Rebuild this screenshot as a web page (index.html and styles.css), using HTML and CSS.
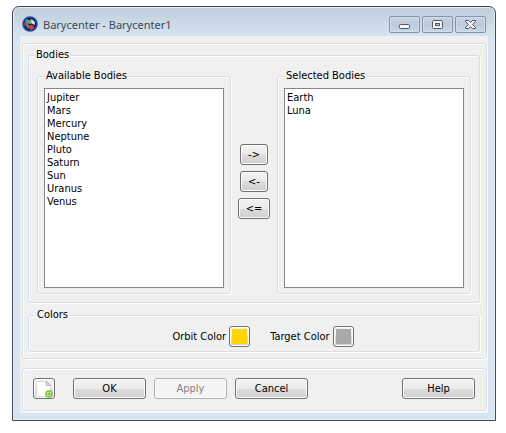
FILE: index.html
```html
<!DOCTYPE html>
<html lang="en">
<head>
<meta charset="utf-8">
<meta name="viewport" content="width=device-width, initial-scale=1">
<title>Barycenter - Barycenter1</title>
<link rel="stylesheet" href="styles.css">
</head>
<body>
<main class="window">
  <header class="titlebar">
    <svg class="app-icon" viewBox="0 0 16 16" aria-hidden="true">
      <circle cx="8" cy="8" r="7" fill="#13203f" stroke="#1d4fb0" stroke-width="1.6"/>
      <path d="M3 5 5 3 8 5 6 8 8 12 5 12Z" fill="#2d9be8"/>
      <path d="M6 5 10 3 9 7 6.500 8Z" fill="#4fc07a"/>
      <path d="M9.500 3 13 6 12.500 9 9 7Z" fill="#c9e4f2"/>
      <path d="M2 6 5 7 4.500 10 2.500 10Z" fill="#d8342c"/>
      <path d="M7.500 9 10.500 9 12.500 12 9 14 6.500 12Z" fill="#e03b2c"/>
      <path d="M4.500 3.500 9 8" stroke="#f06a32" stroke-width="1"/>
    </svg>
    <h1 class="title">Barycenter - Barycenter1</h1>
    <div class="window-buttons">
      <button class="caption" type="button" aria-label="Minimize">
        <svg viewBox="0 0 12 10"><rect x=".5" y="4.500" width="10" height="4" rx="1" fill="#f5f5f5" stroke="#535666"/></svg>
      </button>
      <button class="caption" type="button" aria-label="Maximize">
        <svg viewBox="0 0 12 10"><rect x=".5" y=".5" width="10" height="8" rx="1" fill="#f5f5f5" stroke="#535666"/><rect x="3.500" y="3.500" width="4" height="2" fill="#b9c9da" stroke="#535666"/></svg>
      </button>
      <button class="caption" type="button" aria-label="Close">
        <svg viewBox="0 0 12 10"><path d="M.5.5H3.500L5.500 2.500 7.500.5H10.500V1.500L7.500 4.500 10.500 7.500V8.500H7.500L5.500 6.500 3.500 8.500H.5V7.500L3.500 4.500.5 1.500Z" fill="#f5f5f5" stroke="#535666"/></svg>
      </button>
    </div>
  </header>
  <form class="client">
    <div class="frame content">
      <fieldset class="group bodies">
        <legend>Bodies</legend>
        <div class="transfer">
          <fieldset class="group list-group">
            <legend id="available">Available Bodies</legend>
            <select class="list" size="10" aria-labelledby="available">
              <option>Jupiter</option>
              <option>Mars</option>
              <option>Mercury</option>
              <option>Neptune</option>
              <option>Pluto</option>
              <option>Saturn</option>
              <option>Sun</option>
              <option>Uranus</option>
              <option>Venus</option>
            </select>
          </fieldset>
          <div class="moves">
            <button class="button move" type="button">-&gt;</button>
            <button class="button move" type="button">&lt;-</button>
            <button class="button move wide" type="button">&lt;=</button>
          </div>
          <fieldset class="group list-group">
            <legend id="selected">Selected Bodies</legend>
            <select class="list" size="10" aria-labelledby="selected">
              <option>Earth</option>
              <option>Luna</option>
            </select>
          </fieldset>
        </div>
      </fieldset>
      <fieldset class="group">
        <legend>Colors</legend>
        <div class="colors">
          <div class="color-field">
            <label for="orbit">Orbit Color</label>
            <button class="button swatch" id="orbit" type="button"><span class="chip orbit"></span></button>
          </div>
          <div class="color-field">
            <label for="target">Target Color</label>
            <button class="button swatch" id="target" type="button"><span class="chip target"></span></button>
          </div>
        </div>
      </fieldset>
    </div>
    <div class="frame actions">
      <button class="button script" type="button" aria-label="Show script">
        <svg viewBox="0 0 18 18">
          <path d="M1.500 1.500H12L15.500 5V16.500H1.500Z" fill="#fff" stroke="#dadada"/>
          <path d="M11.500 1.500V5.500H15.500Z" fill="#e6e6e6" stroke="#b4b4b4"/>
          <circle cx="14" cy="14" r="3" fill="#fff" stroke="#84c03a" stroke-width="1.500"/>
          <path d="M14 11.500V16.500M11.500 14H16.500" stroke="#84c03a" stroke-width="1.300"/>
        </svg>
      </button>
      <button class="button action" type="button">OK</button>
      <button class="button action" type="button" disabled>Apply</button>
      <button class="button action" type="button">Cancel</button>
      <button class="button action help" type="button">Help</button>
    </div>
  </form>
</main>
</body>
</html>
```
FILE: styles.css
```css
* {
  box-sizing: border-box;
}

body {
  margin: 0;
  padding: 6px 10px 12px 12px;
  background: #fff;
  color: #000;
  font: 11px/13px "DejaVu Sans Condensed", "DejaVu Sans", sans-serif;
}

.window {
  padding: 0 7px 7px;
  border: 1px solid #45464c;
  border-radius: 7px 7px 0 0;
  background: linear-gradient(#bfcddb, #d7e4f2 30px);
  box-shadow: inset 0 0 0 1px #e6eef6;
}

.titlebar {
  display: flex;
  align-items: center;
  gap: 5px;
  height: 29px;
  padding: 0 2px;
}

.app-icon {
  width: 16px;
  height: 16px;
  margin-top: 4px;
}

.title {
  margin: 5px 0 0;
  color: #3f464f;
  font: 11px/15px "Noto Sans", sans-serif;
}

.window-buttons {
  display: flex;
  gap: 2px;
  margin: 6px 0 0 auto;
}

.caption {
  display: grid;
  place-items: center;
  width: 31px;
  height: 17px;
  padding: 0;
  border: 1px solid #8593ae;
  border-radius: 2px;
  background: linear-gradient(#c6d3e1, #bccbdc 50%, #c8d6e5);
  box-shadow: inset 0 0 0 1px #d3deea;
}

.caption svg {
  width: 12px;
  height: 10px;
}

.client {
  padding: 7px 1px 2px 2px;
  background: #f0f0f0;
}

.frame,
.group {
  border: 1px solid #d5dfe5;
  border-radius: 3px;
  box-shadow: 1px 1px 0 #fff, inset 1px 1px 0 #fff;
}

.content {
  padding: 4px 6px 6px 5px;
}

.group {
  min-width: 0;
  margin: 0;
  padding: 0 6px 4px;
}

.group + .group {
  margin-top: 5px;
}

legend {
  height: 14px;
  padding: 0 2px;
  background: #f0f0f0;
  line-height: 14px;
}

.bodies {
  padding: 7px 8px 8px;
}

.bodies > legend {
  margin-left: -3px;
}

.transfer {
  display: grid;
  grid-template-columns: 1fr 46px 1fr;
}

.list-group {
  padding: 5px 6px 5px;
}

.list {
  display: block;
  width: 100%;
  height: 200px;
  padding: 2px;
  border: 1px solid #828790;
  border-radius: 0;
  background: #fff;
  color: #000;
  font: inherit;
  overflow: hidden;
}

.list option {
  min-height: 13px;
  padding: 0;
  line-height: 13px;
}

.moves {
  display: flex;
  flex-direction: column;
  align-items: center;
  justify-content: center;
  gap: 6px;
}

.button {
  height: 21px;
  padding: 0;
  border: 1px solid #707070;
  border-radius: 3px;
  background: linear-gradient(#f2f2f2, #ebebeb 50%, #dddddd 50%, #cfcfcf);
  box-shadow: inset 0 0 0 1px #fbfbfb;
  color: #000;
  font: inherit;
}

.button:disabled {
  border-color: #adb2b5;
  background: #f4f4f4;
  color: #838383;
}

.move {
  width: 28px;
}

.wide {
  width: 32px;
}

.colors {
  display: flex;
  justify-content: center;
  gap: 20px;
  padding: 4px 0 0 18px;
}

.color-field {
  display: flex;
  align-items: center;
  gap: 3px;
}

.swatch {
  display: grid;
  place-items: center;
  width: 21px;
}

.chip {
  width: 15px;
  height: 15px;
}

.orbit {
  background: #ffd700;
}

.target {
  background: #a9a9a9;
}

.actions {
  display: flex;
  gap: 8px;
  margin-top: 9px;
  padding: 9px 11px 11px 10px;
}

.script {
  display: grid;
  place-items: center;
  width: 22px;
  margin-right: 10px;
}

.script svg {
  width: 18px;
  height: 18px;
}

.action {
  width: 73px;
}

.help {
  margin-left: auto;
}
```
